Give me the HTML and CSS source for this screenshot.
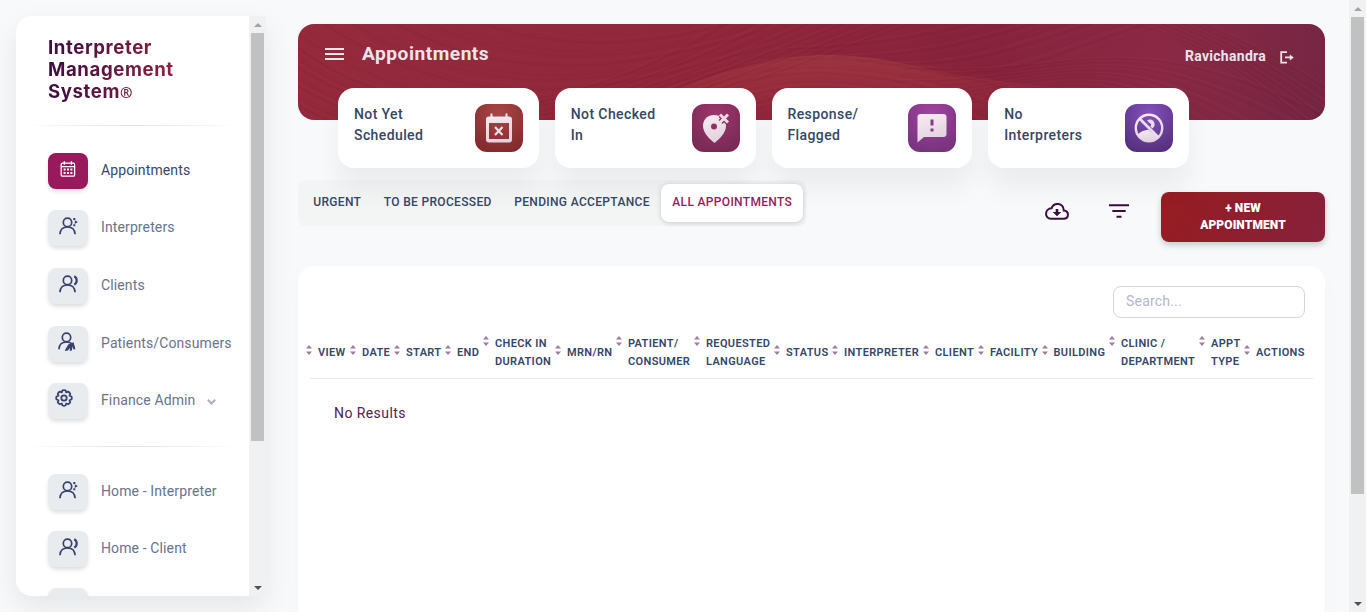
FILE: index.html
```html
<!DOCTYPE html>
<html lang="en">
<head>
<meta charset="utf-8">
<title>Appointments</title>
<link rel="stylesheet" href="styles.css">
</head>
<body>
<svg class="defs" width="0" height="0">
  <defs>
    <linearGradient id="pale" x1="0" y1="0" x2="0.3" y2="1"><stop offset="0" stop-color="#f8edf3"/><stop offset="1" stop-color="#e2d2de"/></linearGradient>
    <symbol id="person" viewBox="0 0 20 20"><circle cx="9.5" cy="6.4" r="4.2"/><path d="M1.9 18.200C2.200 13.600 5.200 11 9.500 11s7.300 2.600 7.600 7.200"/></symbol>
    <symbol id="sort" viewBox="0 0 6 10"><path d="M0 3.6 3 0l3 3.6zM0 6.4 3 10l3-3.6z"/></symbol>
  </defs>
</svg>
<div class="page">
  <aside class="sidebar">
    <div class="side-body">
      <div class="brand">Interpreter<br>Management<br>System<span class="reg">®</span></div>
      <div class="rule"></div>
      <nav class="nav">
        <a class="item active"><span class="tile"><svg width="16" height="16" viewBox="0 0 16 16" fill="none" stroke="#fff" stroke-width="1.3"><rect x="1.2" y="2.2" width="13.4" height="13" rx="1.3"/><path d="M4.3.2v3.6M11.4.2v3.6M1.2 5.6h13.4"/><path d="M3.6 8.6h2M7 8.6h2M10.4 8.6h2M3.6 12h2M7 12h2M10.4 12h2" stroke-width="2"/></svg></span>Appointments</a>
        <a class="item"><span class="tile"><svg class="ic" width="20" height="20"><use href="#person" width="20" height="20"/><path class="fill" d="M15.300 2h2v2h-2zM15.300 8.200h2v2h-2zM16.800 4.200 19.900 6.100 16.800 8z"/></svg></span>Interpreters</a>
        <a class="item"><span class="tile"><svg class="ic" width="20" height="20"><use href="#person" width="20" height="20"/><path d="M16.200 2.200c3.300 1.600 3.300 6.800 0 8.200" stroke-width="2.200"/></svg></span>Clients</a>
        <a class="item"><span class="tile"><svg class="ic left" width="20" height="20"><use href="#person" width="20" height="20"/><path class="fill" d="m11.200 13.400 5.400-2.200 1.800 7.200-2.400-1.400-.6-2-.5 4.600-2.200.4.400-3-2.600 2.800H7.600z"/></svg></span>Patients/Consumers</a>
        <a class="item"><span class="tile"><svg class="ic gear" width="18" height="18" viewBox="0 0 24 24"><circle cx="12" cy="12" r="3.6"/><path d="M10 1.800q2-.8 4 0l1 2.700 2.500-1q2 .9 2.800 2.800l-1 2.700 2.700 1q.8 2 0 4l-2.700 1 1 2.500q-.8 2-2.800 2.800l-2.500-1-1 2.700q-2 .8-4 0l-1-2.700-2.500 1q-2-.8-2.800-2.800l1-2.500-2.700-1q-.8-2 0-4l2.700-1-1-2.700q.8-1.900 2.800-2.800l2.500 1z"/></svg></span>Finance Admin<svg class="chev" width="9" height="6" viewBox="0 0 9 6"><path d="M.8.8 4.500 4.500 8.200.8"/></svg></a>
      </nav>
      <div class="rule second"></div>
      <nav class="nav">
        <a class="item"><span class="tile"><svg class="ic" width="20" height="20"><use href="#person" width="20" height="20"/><path class="fill" d="M15.300 2h2v2h-2zM15.300 8.200h2v2h-2zM16.800 4.200 19.900 6.100 16.800 8z"/></svg></span>Home - Interpreter</a>
        <a class="item"><span class="tile"><svg class="ic" width="20" height="20"><use href="#person" width="20" height="20"/><path d="M16.200 2.200c3.300 1.600 3.300 6.800 0 8.200" stroke-width="2.200"/></svg></span>Home - Client</a>
        <a class="item"><span class="tile"></span></a>
      </nav>
    </div>
    <div class="scroll"><i class="arrow up"></i><i class="thumb"></i><i class="arrow down"></i></div>
  </aside>

  <main class="main">
    <header class="hero">
      <svg class="waves" viewBox="0 0 1027 96" preserveAspectRatio="none" aria-hidden="true">
        <defs>
          <linearGradient id="ridge" x1="0" y1="0" x2="0" y2="1"><stop offset="0" stop-color="#a03a42" stop-opacity=".8"/><stop offset="1" stop-color="#98283d" stop-opacity=".55"/></linearGradient>
          <linearGradient id="fade" x1="0" x2="1"><stop offset=".55" stop-color="#fff"/><stop offset="1" stop-color="#000"/></linearGradient>
          <mask id="soft"><rect x="330" width="530" height="96" fill="url(#fade)"/></mask>
        </defs>
        <path mask="url(#soft)" d="M370 68C440 40 490 31 530 31C590 31 640 50 700 57C750 62 800 66 860 96H330Z" fill="url(#ridge)"/>
        <g id="lines"></g>
      </svg>
      <div class="bar">
        <svg class="burger" width="19" height="12" viewBox="0 0 19 12"><path d="M0 1h19M0 6h19M0 11h19"/></svg>
        <h1>Appointments</h1>
        <span class="user">Ravichandra</span>
        <svg class="logout" width="14" height="13" viewBox="0 0 14 13"><path d="M7 1.2H1.2v10.4H7M5 6.4h6"/><path class="tip" d="M9.8 3.4 13.8 6.4 9.8 9.4z"/></svg>
      </div>
    </header>

    <section class="cards">
      <div class="card"><p>Not Yet<br>Scheduled</p><span class="badge red"><svg width="28" height="30" viewBox="0 0 28 30"><path fill="url(#pale)" fill-rule="evenodd" d="M5.500.5h2v3h13v-3h2v3H24a3 3 0 0 1 3 3v20a3 3 0 0 1-3 3H4a3 3 0 0 1-3-3v-20a3 3 0 0 1 3-3h1.500zM4 10v16h20V10z"/><path d="m10 14 7.500 8M17.500 14 10 22" stroke="#f0dfe5" stroke-width="2.200"/></svg></span></div>
      <div class="card"><p>Not Checked<br>In</p><span class="badge plum"><svg width="28" height="32" viewBox="0 0 28 32"><path fill="url(#pale)" fill-rule="evenodd" d="M12 3C5.500 3 1 7.600 1 14c0 7 7 13.500 11.500 17C17 27.500 24 21 24 14c0-6.400-5-11-12-11zm0 8.500a3 3 0 1 1 0 6 3 3 0 0 1 0-6z"/><path d="m18.500 3 7 7M25.500 3l-7 7" stroke="#8d3061" stroke-width="5.500"/><path d="m18 2.500 8 8M26 2.500l-8 8" stroke="#eadbe5" stroke-width="3"/></svg></span></div>
      <div class="card"><p>Response/<br>Flagged</p><span class="badge violet"><svg width="30" height="30" viewBox="0 0 30 30"><path fill="url(#pale)" d="M3.500 1h23A3 3 0 0 1 29.500 4v17a3 3 0 0 1-3 3H7L.500 29.500V4a3 3 0 0 1 3-3z"/><path d="M15 6.500v6M15 15.500v3" stroke="#8a3991" stroke-width="3"/></svg></span></div>
      <div class="card"><p>No<br>Interpreters</p><span class="badge purple"><svg width="30" height="30" viewBox="0 0 30 30"><circle cx="15" cy="15" r="13.200" fill="none" stroke="url(#pale)" stroke-width="2.400"/><path fill="url(#pale)" d="M3.500 21.500c3.500-3.200 7-4.600 11-4.800L24.500 25C19 30.500 8 29.500 3.500 21.500z"/><path fill="#e9deef" d="M13 7.500c4-2.500 8.500.5 7.500 5.500l-2 2.500-2.300-2.300c1.600-1 1.300-2.700-.2-2.700z"/><path d="M6 6l18.500 18.500" stroke="#e9deef" stroke-width="2.800"/></svg></span></div>
    </section>

    <section class="tools">
      <div class="tabs"><span>URGENT</span><span>TO BE PROCESSED</span><span>PENDING ACCEPTANCE</span><span class="on">ALL APPOINTMENTS</span></div>
      <svg class="cloud" width="24" height="17" viewBox="0 0 24 17"><path d="M6 15.800h12.500c6 0 5.700-8 .3-8.300C18.300-.800 8.500-.800 6.600 5.300-.7 5.600-.7 15.800 6 15.800z"/><path class="solid" d="M10.700 6h2.600v3h3L12 13.200 7.700 9h3z"/></svg>
      <svg class="filter" width="20" height="14" viewBox="0 0 20 14"><path d="M0 1.200h20M3.300 7h13.400M7.500 12.800h5"/></svg>
      <button class="new">+ NEW<br>APPOINTMENT</button>
    </section>

    <section class="panel">
      <input class="search" type="text" placeholder="Search...">
      <div class="thead">
        <div class="th"><svg><use href="#sort"/></svg>VIEW</div>
        <div class="th"><svg><use href="#sort"/></svg>DATE</div>
        <div class="th"><svg><use href="#sort"/></svg>START</div>
        <div class="th"><svg><use href="#sort"/></svg>END</div>
        <div class="th"><svg><use href="#sort"/></svg>CHECK IN<br>DURATION</div>
        <div class="th"><svg><use href="#sort"/></svg>MRN/RN</div>
        <div class="th"><svg><use href="#sort"/></svg>PATIENT/<br>CONSUMER</div>
        <div class="th"><svg><use href="#sort"/></svg>REQUESTED<br>LANGUAGE</div>
        <div class="th"><svg><use href="#sort"/></svg>STATUS</div>
        <div class="th"><svg><use href="#sort"/></svg>INTERPRETER</div>
        <div class="th"><svg><use href="#sort"/></svg>CLIENT</div>
        <div class="th"><svg><use href="#sort"/></svg>FACILITY</div>
        <div class="th"><svg><use href="#sort"/></svg>BUILDING</div>
        <div class="th"><svg><use href="#sort"/></svg>CLINIC /<br>DEPARTMENT</div>
        <div class="th"><svg><use href="#sort"/></svg>APPT<br>TYPE</div>
        <div class="th"><svg><use href="#sort"/></svg>ACTIONS</div>
      </div>
      <p class="empty">No Results</p>
    </section>
  </main>
  <div class="scroll pagebar"><i class="arrow up"></i><i class="thumb"></i><i class="arrow down"></i></div>
</div>
<script src="waves.js"></script>
</body>
</html>
```

FILE: styles.css
```css
* { box-sizing: border-box; }
body { margin: 0; background: #f8f9fb; font-family: Roboto, "Liberation Sans", sans-serif; color: #344767; overflow: hidden; }
.defs { position: absolute; }
.page { display: grid; grid-template-columns: 298px 1027px 24px 17px; height: 612px; overflow: hidden; }

.sidebar { margin: 16px 0 0 16px; width: 250px; height: 580px; display: flex; background: #fff; border-radius: 16px 0 16px 16px; box-shadow: 0 12px 30px rgba(0,0,0,.08); overflow: hidden; }
.side-body { width: 233px; overflow: hidden; }
.brand { margin: 20px 0 0 32px; width: 150px; font: 700 18.600px/22px Inter, "Open Sans", sans-serif; letter-spacing: .6px; background: linear-gradient(90deg, #3c0d40, #9d2340); -webkit-background-clip: text; background-clip: text; color: transparent; }
.reg { font: 700 15px/1 "Noto Sans", sans-serif; letter-spacing: 0; }
.rule { height: 1px; margin: 23px 8px 27px; background: linear-gradient(90deg, transparent, #dfe1e4, transparent); }
.rule.second { margin: 5px 8px 27px; }
.nav { display: flex; flex-direction: column; }
.item { height: 57.4px; padding-left: 32px; display: flex; align-items: flex-start; font-size: 14px; line-height: 34px; color: #67748e; white-space: nowrap; letter-spacing: .12px; }
.item.active { color: #344767; }
.item:nth-child(3) { height: 58px; }
.tile { width: 40px; height: 36px; margin-right: 13px; border-radius: 8px; background: #e9ecef; box-shadow: 0 3px 5px -1px rgba(0,0,0,.16); flex: none; }
.tile svg { display: block; margin: 8px 0 0 12px; }
.active .tile { background: #981a5c; }
.ic { fill: none; stroke: #3a416f; stroke-width: 1.7; }
.tile .ic { margin: 6px 0 0 10px; }
.tile .ic.left { margin: 5px 0 0 9px; }
.tile .gear { margin: 6px 0 0 7px; stroke-width: 2.4; stroke-linejoin: round; }
.ic .fill { fill: #3a416f; stroke: none; }
.chev { margin: 16px 0 0 12px; fill: none; stroke: #aab0c2; stroke-width: 2; }

.scroll { width: 17px; background: #f1f1f1; display: flex; flex-direction: column; align-items: center; }
.thumb { width: 13px; height: 408px; background: #c1c1c1; }
.arrow { width: 17px; height: 17px; flex: none; display: flex; align-items: center; justify-content: center; }
.arrow::before { content: ""; border: 4px solid transparent; border-top-width: 0; border-bottom: 4px solid #a3a3a3; }
.arrow.down { margin-top: auto; }
.arrow.down::before { border-bottom-width: 0; border-top: 4px solid #505050; }
.pagebar { grid-column: 4; height: 612px; }
.pagebar .thumb { height: 477px; }

.main { padding-top: 24px; display: flex; flex-direction: column; }
.hero { position: relative; height: 96px; flex: none; border-radius: 16px; overflow: hidden; background: linear-gradient(100deg, #942a3c 0%, #91273c 40%, #87233d 66%, #8b2945 83%, #742643 100%); }
.waves { position: absolute; inset: 0; width: 100%; height: 100%; }
.waves #lines path { fill: none; stroke-width: 1.8; }
.bar { position: relative; display: flex; align-items: center; height: 60px; padding: 0 31px 0 27px; color: #e9e4e8; }
.burger { stroke: #ece5e9; stroke-width: 2; }
.bar h1 { margin: 0 auto 0 18px; font-size: 19.2px; line-height: 24px; font-weight: 700; letter-spacing: .48px; }
.user { font-size: 14px; font-weight: 700; letter-spacing: .28px; padding-top: 4px; }
.logout { margin: 6px 0 0 14px; fill: none; stroke: #ece2e7; stroke-width: 1.8; }
.logout .tip { fill: #ece2e7; stroke: none; }

.cards { position: relative; display: grid; grid-template-columns: repeat(4, 200.75px); gap: 16px; margin: -32px 0 0 40px; }
.card { height: 80px; padding: 16px; display: flex; justify-content: space-between; background: #fff; border-radius: 16px; box-shadow: 0 20px 27px rgba(0,0,0,.055); }
.card p { margin: 0; font-size: 14px; line-height: 21px; font-weight: 500; letter-spacing: .4px; }
.badge { width: 48px; height: 48px; border-radius: 12px; display: flex; align-items: center; justify-content: center; }
.red { background: radial-gradient(circle at 50% 20%, #aa4645, #7c2629); }
.plum { background: radial-gradient(circle at 50% 20%, #9c366b, #732751); }
.violet { background: radial-gradient(circle at 50% 20%, #a1439f, #713078); }
.purple { background: radial-gradient(circle at 50% 20%, #8450bd, #4e2b73); }

.tools { display: flex; margin-top: 12px; height: 86px; align-items: flex-start; }
.tabs { display: flex; width: 508px; height: 46px; padding: 4px 3px 4px 4px; border-radius: 8px; background: rgba(242,242,241,.75); font-size: 12px; font-weight: 500; line-height: 36px; letter-spacing: .33px; white-space: nowrap; }
.tabs span { padding: 0 11.250px; }
.tabs .on { position: relative; height: 38px; background: #fff; color: #981a5c; border-radius: 8px; box-shadow: 0 1px 5px rgba(0,0,0,.18); }
.cloud { margin: 23px 0 0 239px; fill: none; stroke: #3b0e40; stroke-width: 2; }
.cloud .solid { fill: #3b0e40; stroke: none; }
.filter { margin: 24px 0 0 40px; stroke: #3b0e40; stroke-width: 2.100; }
.new { width: 164px; height: 50px; margin: 12px 0 0 auto; border: 0; padding: 0; border-radius: 8px; background: linear-gradient(115deg, #971c20, #87213c); box-shadow: 0 3px 6px rgba(0,0,0,.2); color: #fff; font: 900 12px/17px Roboto, sans-serif; letter-spacing: .1px; }

.panel { height: 400px; flex: none; display: flex; flex-direction: column; background: #fff; border-radius: 16px; padding: 20px 12px 0; box-shadow: 0 10px 24px rgba(0,0,0,.02); }
.search { align-self: flex-end; width: 192px; height: 32px; margin-right: 8px; padding: 0 12px 2px; border: 1px solid #d2d6da; border-radius: 8px; background: #fff; font: 14px Roboto, sans-serif; letter-spacing: .2px; }
.search::placeholder { color: #b3b9c8; opacity: 1; }
.thead { display: grid; grid-template-columns: 44px 44px 51px 38px 72px 61px 78px 80px 58px 91px 55px 63.500px 67.500px 90px 45px 69px; align-items: center; height: 61px; padding-top: 9.500px; border-bottom: 1px solid #e6e8eb; font-size: 11px; line-height: 18px; font-weight: 600; letter-spacing: .36px; white-space: nowrap; }
.th { position: relative; padding-left: 8px; }
.th svg { position: absolute; left: -4px; top: 1px; width: 6px; height: 10px; fill: #9c7d9d; }
.empty { margin: 24px 0 0 24px; font-size: 14px; line-height: 20px; letter-spacing: .42px; color: #4f2453; }
```

FILE: waves.js
```js
// Draws families of curves blended between two boundary curves.
const families = [
  [[0, 20, 120, 110, 280, 90, 420, 0], [0, 120, 160, 200, 420, 60, 700, -30], 26],
  [[120, -40, 210, 20, 330, 30, 450, -10], [0, 10, 160, 120, 310, 80, 480, 30], 14],
  [[360, 70, 450, 22, 560, 20, 710, 60], [360, 160, 460, 35, 620, 80, 760, 160], 18],
  [[480, 24, 620, 18, 700, -10, 770, -30], [640, 50, 780, 65, 790, 0, 980, -20], 18],
  [[610, 42, 780, 55, 820, -10, 1030, 90], [560, 100, 760, 70, 780, 30, 900, 130], 22],
  [[850, -30, 910, 5, 970, 20, 1040, 70], [780, -10, 900, 10, 940, 50, 1030, 120], 18]
];
const colors = ["rgba(190,80,75,.08)", "rgba(90,15,45,.07)", "rgba(175,60,75,.06)", "rgba(120,20,45,.03)", "rgba(90,15,45,.05)"];
const host = document.getElementById("lines");
families.forEach(([a, b, n]) => {
  for (let i = 0; i <= n; i++) {
    const p = a.map((v, k) => (v + (b[k] - v) * i / n).toFixed(1));
    const path = document.createElementNS("http://www.w3.org/2000/svg", "path");
    path.setAttribute("d", `M${p[0]} ${p[1]}C${p.slice(2).join(" ")}`);
    path.setAttribute("stroke", colors[i % colors.length]);
    host.appendChild(path);
  }
});
```
